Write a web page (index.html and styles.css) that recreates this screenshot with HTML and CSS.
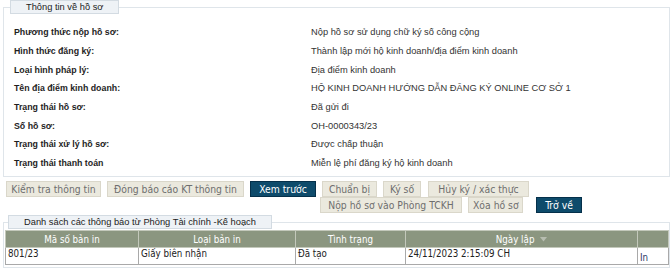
FILE: index.html
```html
<!DOCTYPE html>
<html lang="vi">
<head>
<meta charset="utf-8">
<title>Thông tin về hồ sơ</title>
<link rel="stylesheet" href="styles.css">
</head>
<body>
<div class="page">
  <fieldset class="box info">
    <legend class="legend">Thông tin về hồ sơ</legend>
    <div class="rows">
      <div class="row"><span class="label">Phương thức nộp hồ sơ:</span><span class="value">Nộp hồ sơ sử dụng chữ ký số công cộng</span></div>
      <div class="row"><span class="label">Hình thức đăng ký:</span><span class="value">Thành lập mới hộ kinh doanh/địa điểm kinh doanh</span></div>
      <div class="row"><span class="label">Loại hình pháp lý:</span><span class="value">Địa điểm kinh doanh</span></div>
      <div class="row"><span class="label">Tên địa điểm kinh doanh:</span><span class="value">HỘ KINH DOANH HƯỚNG DẪN ĐĂNG KÝ ONLINE CƠ SỞ 1</span></div>
      <div class="row"><span class="label">Trạng thái hồ sơ:</span><span class="value">Đã gửi đi</span></div>
      <div class="row"><span class="label">Số hồ sơ:</span><span class="value">OH-0000343/23</span></div>
      <div class="row"><span class="label">Trạng thái xử lý hồ sơ:</span><span class="value">Được chấp thuận</span></div>
      <div class="row"><span class="label">Trạng thái thanh toán</span><span class="value">Miễn lệ phí đăng ký hộ kinh doanh</span></div>
    </div>
  </fieldset>

  <div class="actions">
    <div class="group">
      <button class="btn w-check">Kiểm tra thông tin</button>
      <button class="btn w-report">Đóng báo cáo KT thông tin</button>
      <button class="btn primary w-preview">Xem trước</button>
    </div>
    <div class="stack">
      <div class="group">
        <button class="btn w-prepare">Chuẩn bị</button>
        <button class="btn w-sign">Ký số</button>
        <button class="btn w-cancel">Hủy ký / xác thực</button>
      </div>
      <div class="group shift">
        <button class="btn w-submit">Nộp hồ sơ vào Phòng TCKH</button>
        <button class="btn w-delete">Xóa hồ sơ</button>
        <button class="btn primary back w-back">Trở về</button>
      </div>
    </div>
  </div>

  <fieldset class="box list">
    <legend class="legend legend-list">Danh sách các thông báo từ Phòng Tài chính -Kế hoạch</legend>
    <table class="grid">
      <colgroup>
        <col class="c1"><col class="c2"><col class="c3"><col class="c4"><col class="c5">
      </colgroup>
      <thead>
        <tr>
          <th>Mã số bản in</th>
          <th>Loại bản in</th>
          <th>Tình trạng</th>
          <th>Ngày lập <svg class="sort" width="7" height="5" viewBox="0 0 7 5"><path d="M0 0 H7 L3.5 4.5 Z" fill="#b7bdb0"/></svg></th>
          <th></th>
        </tr>
      </thead>
      <tbody>
        <tr>
          <td>801/23</td>
          <td>Giấy biên nhận</td>
          <td>Đã tạo</td>
          <td>24/11/2023 2:15:09 CH</td>
          <td class="link-cell"><a class="link" href="#">In</a></td>
        </tr>
      </tbody>
    </table>
  </fieldset>
</div>
</body>
</html>
```

FILE: styles.css
```css
* { box-sizing: border-box; }

body {
  margin: 0;
  background: #ffffff;
  font-family: "Liberation Sans", Arial, sans-serif;
  color: #222;
}

.page {
  padding: 0 1px 0 3px;
}

.box {
  margin: 0;
  min-width: 0;
  border: 1px solid #dfe5ea;
}

.legend {
  margin-left: 6px;
  padding: 0 15px;
  height: 14px;
  line-height: 12px;
  border: 1px solid #d3dbe2;
  background: #eef2f6;
  font-size: 9.3px;
  color: #222;
}

.info {
  padding: 9px 0 4px 0;
}

.rows {
  display: flex;
  flex-direction: column;
}

.row {
  display: grid;
  grid-template-columns: 297px 1fr;
  align-items: center;
  height: 18.67px;
  padding-left: 10px;
  font-size: 9.3px;
}

.label {
  font-weight: bold;
  font-size: 8.8px;
  color: #1e1e1e;
}

.value {
  color: #333;
}

.actions {
  display: flex;
  align-items: flex-start;
  padding: 4px 0 0 3px;
  height: 38px;
}

.group {
  display: flex;
  align-items: flex-start;
}

.stack {
  display: flex;
  flex-direction: column;
}

.shift {
  margin-left: -2px;
}

.btn {
  height: 16px;
  margin: 0 6px 0 0;
  padding: 0 4px;
  border: 1px solid #dad7ca;
  background: #ebe9de;
  color: #6e6e6e;
  font-family: "DejaVu Sans Condensed", "DejaVu Sans", sans-serif;
  font-stretch: condensed;
  font-size: 10.3px;
  line-height: 14px;
  white-space: nowrap;
  text-align: center;
}

.w-check { width: 95px; }
.w-report { width: 137px; }
.w-preview { width: 66px; }
.w-prepare { width: 55px; }
.w-sign { width: 38px; }
.w-cancel { width: 101px; margin-left: 1px; }
.w-submit { width: 142px; }
.w-delete { width: 55px; }
.w-back { width: 46px; }

.primary {
  background: #0e4b6b;
  border-color: #05304a;
  color: #ffffff;
}

.back {
  margin-left: 7px;
}

.list {
  padding: 0 0 2px 1px;
}

.legend-list {
  margin-left: 3px;
}

.grid {
  width: 100%;
  border-collapse: collapse;
  margin-top: 1px;
  font-family: "DejaVu Sans Condensed", "DejaVu Sans", sans-serif;
  font-stretch: condensed;
  font-size: 9.7px;
}

.c1 { width: 133px; }
.c2 { width: 157px; }
.c3 { width: 110px; }
.c4 { width: 232px; }

.grid th {
  height: 17px;
  padding: 0 2px;
  background: #8b9680;
  color: #ffffff;
  font-weight: normal;
  border: 1px solid #c3c8bb;
  text-align: center;
}

.grid td {
  height: 17px;
  padding: 0 2px 2px 2px;
  border: 1px solid #a9a9a9;
  color: #222;
  vertical-align: top;
}

.sort {
  margin-left: 3px;
  vertical-align: middle;
}

.grid td.link-cell {
  vertical-align: bottom;
  padding-bottom: 1px;
}

.link {
  color: #2b3a66;
  text-decoration: none;
}
```
